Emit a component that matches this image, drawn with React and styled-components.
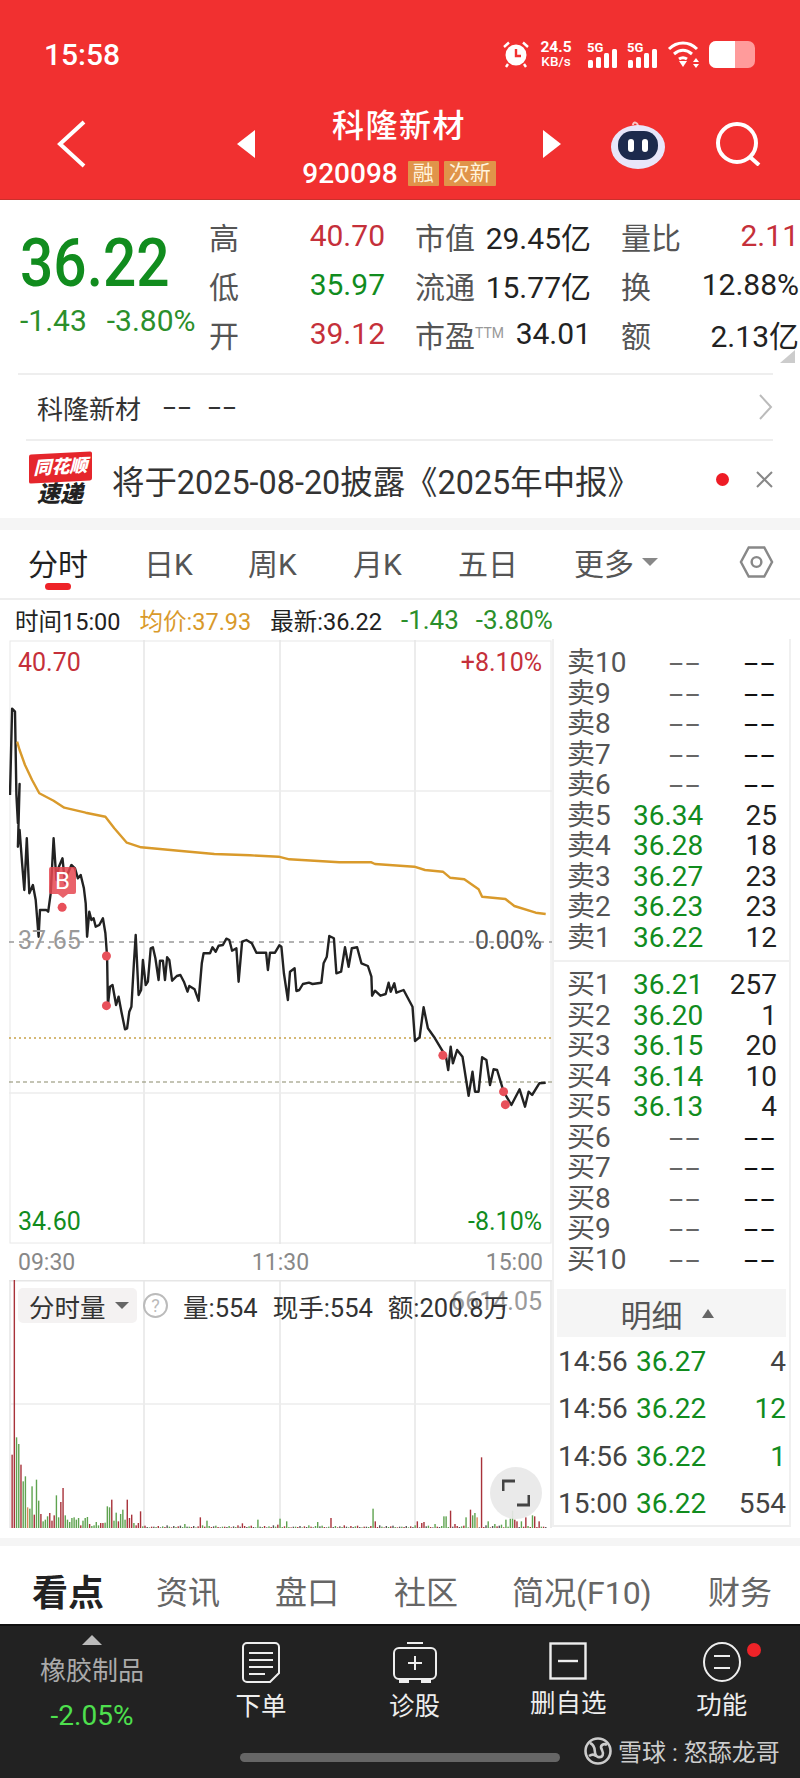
import React from 'react'
import styled, { createGlobalStyle } from 'styled-components'

const GREEN = '#118c1e'
const RED = '#c5303a'
const GOLD = '#d99a2b'
const FONT = 'Roboto, "Noto Sans CJK SC", sans-serif'

const GlobalStyle = createGlobalStyle`
  html, body { margin: 0; padding: 0; background: #fff; }
  body { font-family: ${FONT}; }
  * { box-sizing: border-box; }
`

const Page = styled.div`
  width: 800px;
  height: 1778px;
  overflow: hidden;
  display: flex;
  flex-direction: column;
  background: #fff;
  color: #222;
`

/* ---------- red header ---------- */
const Header = styled.header`
  height: 200px;
  flex: none;
  background: #f13030;
  color: #fff;
  border-bottom: 1px solid #c9302c;
  padding: 38px 45px 0 44px;
`
const StatusBar = styled.div`
  height: 32px;
  display: flex;
  align-items: center;
  justify-content: space-between;
`
const Clock = styled.div`
  font-size: 30px;
  font-weight: 500;
`
const StatusIcons = styled.div`
  display: flex;
  align-items: center;
  gap: 8px;
`
const Speed = styled.div`
  width: 36px;
  margin-right: 5px;
  text-align: center;
  font-weight: 700;
  font-size: 15.5px;
  line-height: 14px;
  white-space: nowrap;
  & > small { display: block; font-size: 13.5px; font-weight: 500; }
`
const NavBar = styled.div`
  margin: 20px 0 0 13px;
  height: 108px;
  display: grid;
  grid-template-columns: 180px 18px 288px 18px 50px 54px 50px 46px;
  align-items: center;
`
const TitleBlock = styled.div`
  display: flex;
  flex-direction: column;
  align-items: center;
`
const Title = styled.div`
  font-size: 32px;
  font-weight: 500;
  line-height: 44px;
  letter-spacing: 1.5px;
  margin-top: 2px;
`
const CodeRow = styled.div`
  display: flex;
  align-items: center;
  gap: 5px;
  height: 26px;
  margin-top: 12px;
  & > b { font-size: 28px; font-weight: 500; margin-right: 5px; }
`
const Tag = styled.span`
  background: #e0944a;
  color: #fff3dd;
  font-size: 21px;
  line-height: 25px;
  padding: 0 5px;
  border-radius: 1px;
`

/* ---------- quote ---------- */
const Quote = styled.section`
  height: 173px;
  flex: none;
  display: flex;
  position: relative;
  padding: 11px 0 0 20px;
`
const PriceBlock = styled.div`
  width: 189px;
  flex: none;
`
const BigPrice = styled.div`
  font-size: 67px;
  font-weight: 500;
  line-height: 76px;
  margin-top: 14px;
  transform: scaleX(0.875);
  transform-origin: left center;
  color: ${GREEN};
`
const PriceDelta = styled.div`
  margin-top: 4px;
  display: flex;
  gap: 20px;
  font-size: 30px;
  line-height: 32px;
  color: #2b8f2b;
  white-space: nowrap;
`
const QuoteGrid = styled.div`
  display: grid;
  grid-template-columns: 176px 176px 178px;
  column-gap: 30px;
  grid-auto-rows: 49px;
  align-items: center;
`
const Cell = styled.div`
  display: flex;
  justify-content: space-between;
  align-items: center;
  font-size: 30px;
  white-space: nowrap;
`
const CellLabel = styled.span`
  color: #555;
  & > sup { font-size: 14px; color: #999; vertical-align: 9px; line-height: 0; }
`
const CellValue = styled.span`
  color: ${(p) => p.$color || '#222'};
`
const CornerMark = styled.div`
  position: absolute;
  right: 5px;
  bottom: 10px;
  width: 0;
  height: 0;
  border-left: 15px solid transparent;
  border-bottom: 13px solid #ccc;
`
const RowLine = styled.div`
  display: flex;
  align-items: center;
  justify-content: space-between;
  margin: 0 27px 0 ${(p) => p.$inset}px;
  height: ${(p) => p.$h}px;
  border-top: 2px solid #eee;
`
const StockLink = styled.div`
  display: flex;
  align-items: center;
  font-size: 26px;
  color: #333;
  margin-left: 19px;
`
const NewsRow = styled.div`
  height: 77px;
  display: flex;
  align-items: center;
  flex: none;
  padding: 0 27px 0 28px;
  & > em { flex: 1; font-style: normal; font-size: 32.4px; color: #333; margin-left: 20px; white-space: nowrap; }
`
const NewsDot = styled.i`
  width: 13px;
  height: 13px;
  border-radius: 50%;
  background: #ee1c25;
  margin-right: 27px;
`
const FlashLogo = styled.div`
  width: 64px;
  height: 54px;
  flex: none;
  display: flex;
  flex-direction: column;
  align-items: center;
`
const FlashTop = styled.div`
  width: 63px;
  height: 29px;
  background: #e5262c;
  color: #fff;
  font-size: 18px;
  font-style: italic;
  font-weight: 900;
  line-height: 28px;
  text-align: center;
  border-radius: 2px;
  transform: skewY(-3deg);
`
const FlashBottom = styled.div`
  font-size: 23px;
  line-height: 25px;
  font-style: italic;
  font-weight: 900;
  color: #222;
`
const Band = styled.div`
  height: ${(p) => p.$h}px;
  flex: none;
  background: #f5f5f5;
`

/* ---------- chart tabs ---------- */
const ChartTabs = styled.nav`
  height: 70px;
  flex: none;
  position: relative;
  display: flex;
  align-items: center;
  padding: 0 26px 4px 28px;
  border-bottom: 2px solid #eee;
`
const ChartTab = styled.div`
  width: ${(p) => p.$w}px;
  flex: none;
  font-size: 30px;
  color: ${(p) => (p.$active ? '#222' : '#555')};
  white-space: nowrap;
  display: flex;
  align-items: center;
  gap: 8px;
  position: relative;
  &::after {
    content: '';
    display: ${(p) => (p.$active ? 'block' : 'none')};
    position: absolute;
    left: 17px;
    top: 43px;
    width: 26px;
    height: 7px;
    border-radius: 4px;
    background: #ee2328;
  }
`
const DownTri = styled.i`
  width: 0;
  height: 0;
  border-left: ${(p) => p.$s}px solid transparent;
  border-right: ${(p) => p.$s}px solid transparent;
  border-top: ${(p) => p.$s}px solid ${(p) => p.$color};
`
const InfoRow = styled.div`
  height: 40px;
  flex: none;
  display: flex;
  align-items: center;
  padding-left: 15px;
  white-space: nowrap;
`
const InfoItem = styled.span`
  color: ${(p) => p.$color || '#222'};
  font-size: ${(p) => p.$size || 23.5}px;
  margin-right: ${(p) => p.$gap}px;
`

/* ---------- chart + book ---------- */
const Market = styled.div`
  height: 898px;
  flex: none;
  display: flex;
  padding-left: 9px;
`
const ChartCol = styled.div`
  width: 543px;
  flex: none;
  display: flex;
  flex-direction: column;
`
const PriceChart = styled.div`
  position: relative;
  height: 604px;
  flex: none;
  & > svg { display: block; }
`
const ChartLabel = styled.span`
  position: absolute;
  font-size: 25px;
  line-height: 30px;
  left: ${(p) => (p.$right ? 'auto' : '9px')};
  right: ${(p) => (p.$right ? '10px' : 'auto')};
  top: ${(p) => p.$top}px;
  color: ${(p) => p.$color};
`
const BuyMark = styled.div`
  position: absolute;
  left: 40px;
  top: 227px;
  width: 27px;
  height: 27px;
  background: rgba(229, 70, 80, 0.85);
  color: #fff;
  font-size: 24px;
  line-height: 28px;
  text-align: center;
  border-radius: 2px;
  &::after {
    content: '';
    position: absolute;
    left: 9px;
    top: 27px;
    border-left: 5px solid transparent;
    border-right: 5px solid transparent;
    border-top: 4px solid rgba(229, 70, 80, 0.85);
  }
`
const TimeAxis = styled.div`
  height: 36px;
  flex: none;
  display: flex;
  justify-content: space-between;
  align-items: center;
  padding: 0 9px;
  font-size: 23px;
  color: #888;
`
const VolumeChart = styled.div`
  position: relative;
  height: 248px;
  flex: none;
  & > svg { display: block; }
`
const VolumeBar = styled.div`
  position: absolute;
  top: 7px;
  left: 0;
  display: flex;
  align-items: center;
  font-size: 25.5px;
  white-space: nowrap;
  color: #333;
`
const VolumeChip = styled.div`
  margin-left: 9px;
  width: 119px;
  height: 35px;
  background: #f4f2f2;
  border-radius: 5px;
  padding-left: 11px;
  display: flex;
  align-items: center;
  gap: 9px;
`
const HelpDot = styled.i`
  width: 25px;
  height: 25px;
  border: 2px solid #bbb;
  border-radius: 50%;
  margin: 0 15px 0 6px;
  font-style: normal;
  font-size: 18px;
  line-height: 21px;
  text-align: center;
  color: #bbb;
`
const VolumeStat = styled.span`
  margin-right: 15px;
`
const VolumeMax = styled.span`
  position: absolute;
  right: 10px;
  top: 7px;
  font-size: 25px;
  color: #9a9a9a;
`
const ExpandButton = styled.div`
  position: absolute;
  left: 481px;
  top: 187px;
  width: 52px;
  height: 52px;
  border-radius: 50%;
  background: rgba(232, 232, 232, 0.92);
  display: flex;
  align-items: center;
  justify-content: center;
`
const BookCol = styled.div`
  width: 239px;
  flex: none;
  margin-top: -1px;
  border-left: 2px solid #f0f0f0;
  border-right: 2px solid #f0f0f0;
  border-bottom: 2px solid #eee;
  height: 888px;
`
const BookGroup = styled.div`
  padding: ${(p) => p.$pad};
  border-bottom: ${(p) => (p.$line ? '2px solid #f0f0f0' : '0')};
`
const BookRow = styled.div`
  height: 30.5px;
  display: grid;
  grid-template-columns: 66px 69px 75px;
  align-items: center;
  padding-left: 13px;
  font-size: 28px;
  line-height: 30px;
  white-space: nowrap;
  color: #555;
  & > :nth-child(2) { text-align: right; color: ${GREEN}; }
  & > :nth-child(3) { text-align: right; color: #222; }
`
const Dash = styled.span`
  display: block;
  text-align: right;
  font-size: 27px;
  letter-spacing: 1.2px;
  transform: scaleX(1.9);
  transform-origin: right center;
  color: ${(p) => p.$color} !important;
`
const StockDash = styled.span`
  display: inline-block;
  width: 16px;
  margin-left: ${(p) => p.$gap}px;
  font-size: 26px;
  letter-spacing: 1.2px;
  white-space: nowrap;
  transform: scaleX(1.8);
  transform-origin: left center;
`
const DetailHead = styled.div`
  margin: 7px 3px 1px;
  height: 48px;
  background: #f5f5f5;
  display: flex;
  align-items: center;
  justify-content: center;
  gap: 19px;
  font-size: 31px;
  color: #555;
  padding-right: 9px;
`
const UpTri = styled.i`
  width: 0;
  height: 0;
  border-left: ${(p) => p.$s}px solid transparent;
  border-right: ${(p) => p.$s}px solid transparent;
  border-bottom: ${(p) => p.$h}px solid ${(p) => p.$color};
`
const DetailRow = styled.div`
  height: 47.3px;
  display: grid;
  grid-template-columns: 78px 69px 1fr;
  align-items: center;
  padding: 0 3px 0 4px;
  font-size: 28px;
  color: #444;
  & > :nth-child(2) { color: ${GREEN}; }
  & > :nth-child(3) { text-align: right; color: ${(p) => p.$qty || '#444'}; }
`

/* ---------- bottom tabs + toolbar ---------- */
const InfoTabs = styled.nav`
  height: 78px;
  flex: none;
  display: flex;
  align-items: center;
  padding: 9px 0 0 32px;
`
const InfoTab = styled.span`
  flex: none;
  width: ${(p) => p.$w}px;
  font-size: ${(p) => (p.$active ? 36 : 32)}px;
  font-weight: ${(p) => (p.$active ? 700 : 400)};
  color: ${(p) => (p.$active ? '#222' : '#666')};
  white-space: nowrap;
`
const Toolbar = styled.footer`
  flex: 1;
  position: relative;
  background: #222;
  border-top: 2px solid #111;
  display: flex;
  padding: 9px 0 0 40px;
`
const Sector = styled.div`
  width: 104px;
  flex: none;
  margin-right: 57px;
  display: flex;
  flex-direction: column;
  align-items: center;
  font-size: 26px;
  color: #aaa;
  line-height: 33px;
  & > b { font-weight: 400; font-size: 28px; color: #4ee04e; margin-top: 11px; }
  & > span { margin-top: 10px; }
`
const ToolGrid = styled.div`
  display: grid;
  grid-template-columns: repeat(4, 120px);
  column-gap: 33.6px;
`
const ToolItem = styled.div`
  display: flex;
  flex-direction: column;
  align-items: center;
  color: #eee;
  font-size: 25.5px;
  line-height: 33px;
  white-space: nowrap;
  padding-top: 7px;
  position: relative;
  & > svg { margin-bottom: 7px; display: block; }
`
const Badge = styled.i`
  position: absolute;
  width: 14px;
  height: 14px;
  top: 8px;
  left: 85px;
  background: #ee2328;
  border-radius: 50%;
`
const HomeBar = styled.div`
  position: absolute;
  left: 240px;
  bottom: 16px;
  width: 320px;
  height: 9px;
  border-radius: 5px;
  background: #666;
`
const Watermark = styled.div`
  position: absolute;
  left: 584px;
  bottom: 10px;
  display: flex;
  align-items: center;
  gap: 6px;
  font-size: 24px;
  color: #ccc;
  white-space: nowrap;
`

/* ---------- chart data, traced in crop coordinates ---------- */
const pricePts = [[28,795,1],[34,536,1],[42,545,1],[46,795,1],[50,880,1],[55,762,1],
  [50,50],[55,0],[62,100],[68,180],[75,25],[82,190],[92,165],[100,210],[108,320],[112,240],[130,240],[135,245],[142,190],[150,25],[158,150],[165,110],[175,85],[182,160],[190,130],[200,105],[210,115],[218,145],[226,135],[235,175],[240,220],[244,320],[250,245],[256,270],[262,265],[268,290],[278,285],[288,265],[295,310],[300,380],[302,525],[308,470],[315,465],[325,525],[332,500],[340,545],[350,598],[356,595],[362,545],[368,530],[375,400],[380,315],[388,495],[395,480],[400,390],[408,465],[414,455],[422,355],[428,352],[435,385],[444,450],[448,392],[456,392],[462,450],[468,382],[474,390],[482,452],[495,438],[505,435],[515,455],[525,485],[530,468],[545,478],[556,512],[565,400],[570,370],[588,370],[595,352],[604,365],[612,347],[624,345],[634,326],[642,330],[650,362],[662,355],[668,455],[678,335],[690,330],[705,340],[718,368],[745,368],[750,420],[756,368],[770,368],[782,346],[788,350],[795,430],[806,510],[812,425],[825,415],[830,483],[838,480],[848,462],[865,458],[875,462],[900,458],[906,400],[915,380],[922,318],[935,325],[942,430],[955,425],[966,352],[976,410],[985,355],[1000,352],[1012,400],[1030,408],[1040,440],[1042,497],[1050,482],[1065,497],[1080,492],[1088,458],[1094,485],[1104,460],[1110,488],[1130,480],[1145,510],[1155,530],[1162,633],[1175,622],[1186,532],[1198,595],[1215,620],[1240,665],[1248,675],[1255,720],[1262,650],[1268,700],[1280,660],[1295,680],[1312,797],[1323,725],[1330,785],[1340,785],[1350,682],[1362,690],[1372,765],[1382,718],[1392,720],[1410,785],[1432,825],[1455,778],[1470,830],[1480,785],[1490,795],[1510,760],[1528,758]]

const goldPts = [[48,635,1],[55,660,1],[70,705,1],[90,750,1],[110,790,1],[150,812,1],[180,833,1],[240,848,1],[295,860,1],[320,895,1],
  [355,38],[395,52],[500,62],[600,72],[700,76],[780,80],[810,88],[950,97],[1040,97],[1050,102],[1160,110],[1190,120],[1240,125],[1260,143],[1300,148],[1340,178],[1350,200],[1415,207],[1440,228],[1500,248],[1528,252]]

const toPage = ([x, y, upper]) => [x / 2.8 - 9, upper ? y / 3 + 530 - 640 : y / 3 + 830 - 640]
const toPath = (pts) => pts.map(toPage).map(([x, y]) => `${x.toFixed(1)},${y.toFixed(1)}`).join(' ')

const tradeDots = [[298,378],[298,527],[1240,676],[1410,785],[1415,824],[174,232]]

const firstBars = [[220,'r'],[745,'r'],[272,'g'],[252,'g'],[190,'r'],[140,'g'],[155,'g'],[62,'o'],[58,'g'],[125,'g'],[40,'r'],[145,'g'],[82,'g'],[42,'r'],[20,'g'],[25,'g'],[35,'g'],[45,'r'],[22,'r'],[38,'r'],[98,'g'],[32,'g'],[78,'r'],[120,'r'],[38,'g'],[25,'g'],[18,'g'],[30,'g'],[32,'g'],[25,'g'],[30,'g'],[8,'r'],[22,'g'],[30,'g'],[33,'g'],[12,'r'],[6,'g'],[8,'g'],[18,'g'],[8,'g'],[15,'r'],[15,'r'],[16,'g'],[65,'g'],[62,'g'],[85,'r'],[22,'g'],[46,'g'],[20,'r'],[42,'g'],[55,'g'],[25,'g'],[85,'r'],[30,'r'],[40,'r'],[15,'g'],[8,'r'],[15,'r'],[50,'r']]
const peakBars = [[517,12,'g'],[562,32,'r'],[580,22,'g'],[675,14,'r'],[718,25,'g'],[773,10,'r'],[785,28,'g'],[800,20,'g'],[886,18,'g'],[923,30,'r'],[1042,58,'g'],[1050,20,'r'],[1168,20,'r'],[1178,15,'r'],[1186,18,'r'],[1218,12,'g'],[1242,35,'g'],[1250,35,'g'],[1261,52,'r'],[1272,12,'r'],[1300,32,'g'],[1305,38,'g'],[1317,55,'r'],[1323,38,'g'],[1330,45,'g'],[1336,32,'o'],[1348,212,'r'],[1367,20,'g'],[1385,12,'g'],[1404,10,'g'],[1417,25,'g'],[1426,28,'g'],[1436,52,'g'],[1442,25,'r'],[1448,20,'r'],[1460,20,'g'],[1473,32,'r'],[1486,38,'g'],[1498,35,'r'],[1510,20,'r'],[1530,62,'k']]
const smallBars = [4,3,6,2,5,3,8,4,2,6,3,5,7,3,2,4]
const barColor = { r: '#a8323a', g: '#5fa350', o: '#d98a5a', k: '#555' }

const volumeBars = Array.from({ length: 242 }, (_, i) => {
  const zx = 32 + i * 6.2
  if (i < firstBars.length) return { zx, h: firstBars[i][0], c: firstBars[i][1] }
  const peak = peakBars.find((b) => Math.abs(b[0] - zx) <= 3.1)
  if (peak) return { zx, h: peak[1], c: peak[2] }
  return { zx, h: smallBars[i % smallBars.length], c: i % 3 === 0 ? 'r' : i % 3 === 1 ? 'k' : 'g' }
})

const sellRows = [
  ['卖10'], ['卖9'], ['卖8'], ['卖7'], ['卖6'],
  ['卖5', '36.34', '25'], ['卖4', '36.28', '18'], ['卖3', '36.27', '23'], ['卖2', '36.23', '23'], ['卖1', '36.22', '12'],
]
const buyRows = [
  ['买1', '36.21', '257'], ['买2', '36.20', '1'], ['买3', '36.15', '20'], ['买4', '36.14', '10'], ['买5', '36.13', '4'],
  ['买6'], ['买7'], ['买8'], ['买9'], ['买10'],
]
const details = [
  ['14:56', '36.27', '4'],
  ['14:56', '36.22', '12', GREEN],
  ['14:56', '36.22', '1', GREEN],
  ['15:00', '36.22', '554'],
]

const Row = ({ row }) => (
  <BookRow>
    <span>{row[0]}</span>
    {row[1] ? <span>{row[1]}</span> : <Dash $color="#666">--</Dash>}
    {row[2] ? <span>{row[2]}</span> : <Dash $color="#111">--</Dash>}
  </BookRow>
)

/* ---------- drawn icons ---------- */
const Alarm = () => (
  <svg width="28" height="27" viewBox="0 0 28 27" fill="none">
    <circle cx="14" cy="14" r="10.5" fill="#fff" />
    <path d="M14 8v7h5" stroke="#f13030" strokeWidth="2.4" />
    <path d="M2 6l5-4.5M26 6l-5-4.5M6 23l-2 3M22 23l2 3" stroke="#fff" strokeWidth="2.4" />
  </svg>
)
const Signal = () => (
  <svg width="32" height="27" viewBox="0 0 32 27" fill="#fff">
    <text x="0" y="11" fontSize="13" fontWeight="700" fontFamily="Roboto">5G</text>
    <rect x="1" y="19" width="5" height="8" rx="1.5" />
    <rect x="9" y="16" width="5" height="11" rx="1.5" />
    <rect x="17" y="12" width="5" height="15" rx="1.5" />
    <rect x="25" y="8" width="5" height="19" rx="1.5" />
  </svg>
)
const Wifi = () => (
  <svg width="34" height="28" viewBox="0 0 34 28" fill="none" stroke="#fff" strokeWidth="3">
    <path d="M2 9C10 1 22 1 30 9M7 14c6-5 12-5 18 0M12 19c3-2 5-2 8 0" />
    <path d="M12 21h8l-4 6z" fill="#fff" stroke="none" />
    <path d="M26 22l3-4 3 4zM26 24l3 4 3-4z" fill="#fff" stroke="none" />
  </svg>
)
const Battery = () => (
  <svg width="46" height="27" viewBox="0 0 46 27">
    <rect x="0" y="0" width="46" height="27" rx="7" fill="#ff9b9b" />
    <path d="M7 0h19v27H7a7 7 0 0 1-7-7V7a7 7 0 0 1 7-7z" fill="#fff" />
  </svg>
)
const Back = () => (
  <svg width="30" height="48" viewBox="0 0 30 48" fill="none" stroke="#fff" strokeWidth="4">
    <path d="M27 2L3 24l24 22" />
  </svg>
)
const NavTri = ({ flip }) => (
  <svg width="18" height="28" viewBox="0 0 18 28" fill="#fff">
    <path d={flip ? 'M0 0l18 14L0 28z' : 'M18 0L0 14l18 14z'} />
  </svg>
)
const Robot = () => (
  <svg width="54" height="50" viewBox="0 0 54 50">
    <path d="M27 8c0-5-5-6-5-2" fill="none" stroke="#f9c5c5" strokeWidth="2" />
    <ellipse cx="27" cy="28" rx="27" ry="22" fill="#e8e6fa" />
    <rect x="7" y="12" width="40" height="29" rx="14" fill="#1d2a4d" />
    <rect x="17" y="20" width="6" height="13" rx="3" fill="#fff" />
    <rect x="31" y="20" width="6" height="13" rx="3" fill="#fff" />
  </svg>
)
const Search = () => (
  <svg width="46" height="44" viewBox="0 0 46 44" fill="none" stroke="#fff" strokeWidth="4">
    <circle cx="22" cy="21" r="19" />
    <path d="M35 35l9 8" />
  </svg>
)
const ChevronRight = () => (
  <svg width="14" height="26" viewBox="0 0 14 26" fill="none" stroke="#bbb" strokeWidth="2">
    <path d="M1 1l11 12L1 25" />
  </svg>
)
const Close = () => (
  <svg width="17" height="17" viewBox="0 0 17 17" fill="none" stroke="#888" strokeWidth="2">
    <path d="M1 1l15 15M16 1L1 16" />
  </svg>
)
const HexSetting = () => (
  <svg width="36" height="36" viewBox="0 0 36 36" fill="none" stroke="#888" strokeWidth="2.5">
    <path d="M10 3h16l8 15-8 15H10L2 18z" />
    <circle cx="18" cy="18" r="5" />
  </svg>
)
const OrderIcon = () => (
  <svg width="38" height="41" viewBox="0 0 38 41" fill="none" stroke="#eee" strokeWidth="2">
    <path d="M5 1h28a4 4 0 0 1 4 4v26l-9 9H5a4 4 0 0 1-4-4V5a4 4 0 0 1 4-4z" />
    <path d="M7 11h24M7 18h24M7 25h24M7 32h16" />
  </svg>
)
const DiagnoseIcon = () => (
  <svg width="44" height="41" viewBox="0 0 44 41" fill="none" stroke="#eee" strokeWidth="2">
    <rect x="1" y="6" width="42" height="31" rx="5" />
    <path d="M14 1h16M22 14v14M15 21h14" />
    <path d="M7 37h8v3H7zM29 37h8v3h-8z" fill="#eee" />
  </svg>
)
const MinusIcon = () => (
  <svg width="38" height="38" viewBox="0 0 38 38" fill="none" stroke="#eee" strokeWidth="2.4">
    <rect x="1.5" y="1.5" width="35" height="35" />
    <path d="M9 19h20" />
  </svg>
)
const MoreIcon = () => (
  <svg width="38" height="40" viewBox="0 0 38 40" fill="none" stroke="#eee" strokeWidth="2">
    <ellipse cx="19" cy="20" rx="18" ry="19" />
    <path d="M11 14h16M11 26h16" />
  </svg>
)
const SnowLogo = () => (
  <svg width="28" height="30" viewBox="0 0 28 30" fill="none" stroke="#ccc" strokeWidth="2.6">
    <circle cx="14" cy="15" r="12.5" />
    <path d="M6 7c8 3 2 12 8 14 5 1 6-3 4-7-3-5 2-7 5-5M5 20c3-2 5-2 7 0" />
  </svg>
)
const CornerIcon = () => (
  <svg width="28" height="28" viewBox="0 0 28 28" fill="none" stroke="#444" strokeWidth="3">
    <path d="M1 12V2h12M27 16v10H15" />
  </svg>
)

export default function App() {
  return (
    <Page>
      <GlobalStyle />
      <Header>
        <StatusBar>
          <Clock>15:58</Clock>
          <StatusIcons>
            <Alarm />
            <Speed>24.5<small>KB/s</small></Speed>
            <Signal />
            <Signal />
            <Wifi />
            <Battery />
          </StatusIcons>
        </StatusBar>
        <NavBar>
          <Back />
          <NavTri />
          <TitleBlock>
            <Title>科隆新材</Title>
            <CodeRow>
              <b>920098</b>
              <Tag>融</Tag>
              <Tag>次新</Tag>
            </CodeRow>
          </TitleBlock>
          <NavTri flip />
          <span />
          <Robot />
          <span />
          <Search />
        </NavBar>
      </Header>

      <Quote>
        <PriceBlock>
          <BigPrice>36.22</BigPrice>
          <PriceDelta>
            <span>-1.43</span>
            <span>-3.80%</span>
          </PriceDelta>
        </PriceBlock>
        <QuoteGrid>
          <Cell><CellLabel>高</CellLabel><CellValue $color={RED}>40.70</CellValue></Cell>
          <Cell><CellLabel>市值</CellLabel><CellValue>29.45亿</CellValue></Cell>
          <Cell><CellLabel>量比</CellLabel><CellValue $color={RED}>2.11</CellValue></Cell>
          <Cell><CellLabel>低</CellLabel><CellValue $color={GREEN}>35.97</CellValue></Cell>
          <Cell><CellLabel>流通</CellLabel><CellValue>15.77亿</CellValue></Cell>
          <Cell><CellLabel>换</CellLabel><CellValue>12.88%</CellValue></Cell>
          <Cell><CellLabel>开</CellLabel><CellValue $color={RED}>39.12</CellValue></Cell>
          <Cell><CellLabel>市盈<sup>TTM</sup></CellLabel><CellValue>34.01</CellValue></Cell>
          <Cell><CellLabel>额</CellLabel><CellValue>2.13亿</CellValue></Cell>
        </QuoteGrid>
        <CornerMark />
      </Quote>
      <RowLine $inset={18} $h={66}>
        <StockLink>科隆新材<StockDash $gap={22}>--</StockDash><StockDash $gap={29}>--</StockDash></StockLink>
        <ChevronRight />
      </RowLine>
      <RowLine $inset={26} $h={0} />
      <NewsRow>
        <FlashLogo>
          <FlashTop>同花顺</FlashTop>
          <FlashBottom>速递</FlashBottom>
        </FlashLogo>
        <em>将于2025-08-20披露《2025年中报》</em>
        <NewsDot />
        <Close />
      </NewsRow>
      <Band $h={12} />

      <ChartTabs>
        <ChartTab $w={116} $active>分时</ChartTab>
        <ChartTab $w={104}>日K</ChartTab>
        <ChartTab $w={105}>周K</ChartTab>
        <ChartTab $w={105}>月K</ChartTab>
        <ChartTab $w={116}>五日</ChartTab>
        <ChartTab $w={165}>更多<DownTri $s={8} $color="#888" /></ChartTab>
        <HexSetting />
      </ChartTabs>
      <InfoRow>
        <InfoItem $gap={19}>时间15:00</InfoItem>
        <InfoItem $color={GOLD} $gap={19}>均价:37.93</InfoItem>
        <InfoItem $gap={19}>最新:36.22</InfoItem>
        <InfoItem $color="#2b8f2b" $size={26} $gap={17}>-1.43</InfoItem>
        <InfoItem $color="#2b8f2b" $size={26} $gap={0}>-3.80%</InfoItem>
      </InfoRow>

      <Market>
        <ChartCol>
          <PriceChart>
            <svg width="543" height="604" viewBox="0 0 543 604" fill="none">
              <rect x="1" y="1" width="541" height="602" stroke="#e8e8e8" strokeWidth="1" />
              {[135, 271, 406].map((x) => <path key={x} d={`M${x} 0v604`} stroke="#e6e6e6" strokeWidth="1.5" />)}
              {[151, 453].map((y) => <path key={y} d={`M0 ${y}h543`} stroke="#ececec" strokeWidth="1.5" />)}
              <path d="M0 302h543" stroke="#999" strokeWidth="1.5" strokeDasharray="5 5" />
              <path d="M0 398h543" stroke="#c9a24a" strokeWidth="1.5" strokeDasharray="2 3" />
              <path d="M0 442h543" stroke="#8a8a6a" strokeWidth="1.2" strokeDasharray="4 3" />
              <polyline points={toPath(pricePts)} stroke="#222" strokeWidth="2.4" strokeLinejoin="round" />
              <polyline points={toPath(goldPts)} stroke={GOLD} strokeWidth="2.4" strokeLinejoin="round" />
              {tradeDots.map((d) => {
                const [x, y] = toPage(d)
                return <circle key={d[0] + '-' + d[1]} cx={x} cy={y} r="4.5" fill="#e8505a" />
              })}
            </svg>
            <ChartLabel $top={8} $color={RED}>40.70</ChartLabel>
            <ChartLabel $top={8} $right $color={RED}>+8.10%</ChartLabel>
            <ChartLabel $top={286} $color="#999">37.65</ChartLabel>
            <ChartLabel $top={286} $right $color="#555">0.00%</ChartLabel>
            <ChartLabel $top={567} $color={GREEN}>34.60</ChartLabel>
            <ChartLabel $top={567} $right $color={GREEN}>-8.10%</ChartLabel>
            <BuyMark>B</BuyMark>
          </PriceChart>
          <TimeAxis>
            <span>09:30</span>
            <span>11:30</span>
            <span>15:00</span>
          </TimeAxis>
          <VolumeChart>
            <svg width="543" height="248" viewBox="0 0 543 248" fill="none">
              <path d="M1 0v248M542 0v248M0 .7h543" stroke="#e6e6e6" strokeWidth="1.5" />
              {[135, 271, 406].map((x) => <path key={x} d={`M${x} 0v248`} stroke="#e6e6e6" strokeWidth="1.5" />)}
              <path d="M0 124h543" stroke="#ececec" strokeWidth="1.5" />
              {volumeBars.map((b) => (
                <rect key={b.zx} x={b.zx / 2.8 - 9} y={248 - b.h / 3} width="1.4" height={b.h / 3} fill={barColor[b.c]} />
              ))}
            </svg>
            <VolumeMax>6614.05</VolumeMax>
            <VolumeBar>
              <VolumeChip>分时量<DownTri $s={7} $color="#666" /></VolumeChip>
              <HelpDot>?</HelpDot>
              <VolumeStat>量:554</VolumeStat>
              <VolumeStat>现手:554</VolumeStat>
              <VolumeStat>额:200.8万</VolumeStat>
            </VolumeBar>
            <ExpandButton><CornerIcon /></ExpandButton>
          </VolumeChart>
        </ChartCol>
        <BookCol>
          <BookGroup $pad="9px 0 7px" $line>
            {sellRows.map((r) => <Row key={r[0]} row={r} />)}
          </BookGroup>
          <BookGroup $pad="8px 0 7px">
            {buyRows.map((r) => <Row key={r[0]} row={r} />)}
          </BookGroup>
          <DetailHead>明细<UpTri $s={6} $h={9} $color="#666" /></DetailHead>
          {details.map((d, i) => (
            <DetailRow key={i} $qty={d[3]}>
              <span>{d[0]}</span>
              <span>{d[1]}</span>
              <span>{d[2]}</span>
            </DetailRow>
          ))}
        </BookCol>
      </Market>

      <Band $h={8} />
      <InfoTabs>
        <InfoTab $w={124} $active>看点</InfoTab>
        <InfoTab $w={119}>资讯</InfoTab>
        <InfoTab $w={119}>盘口</InfoTab>
        <InfoTab $w={118}>社区</InfoTab>
        <InfoTab $w={196}>简况(F10)</InfoTab>
        <InfoTab $w={64}>财务</InfoTab>
      </InfoTabs>
      <Toolbar>
        <Sector>
          <UpTri $s={10} $h={10} $color="#bbb" />
          <span>橡胶制品</span>
          <b>-2.05%</b>
        </Sector>
        <ToolGrid>
          <ToolItem><OrderIcon />下单</ToolItem>
          <ToolItem><DiagnoseIcon />诊股</ToolItem>
          <ToolItem><MinusIcon />删自选</ToolItem>
          <ToolItem><MoreIcon />功能<Badge /></ToolItem>
        </ToolGrid>
        <HomeBar />
        <Watermark><SnowLogo />雪球 : 怒舔龙哥</Watermark>
      </Toolbar>
    </Page>
  )
}
